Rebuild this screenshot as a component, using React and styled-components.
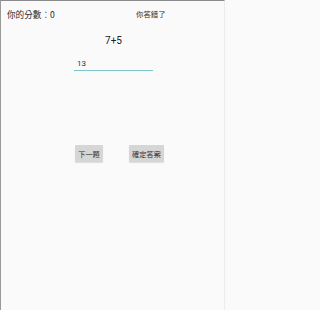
import styled, { createGlobalStyle } from 'styled-components';

const Global = createGlobalStyle`
  html, body {
    margin: 0;
    padding: 0;
    background: #fafafa;
  }
  body {
    font-family: "Noto Sans CJK TC", "Noto Sans", Roboto, sans-serif;
  }
`;

const Screen = styled.div`
  width: 225px;
  height: 310px;
  box-sizing: border-box;
  border-top: 1px solid #8a8a8a;
  border-left: 1px solid #9a9a9a;
  border-right: 1px solid #ececec;
  background: #fafafa;
  display: flex;
  flex-direction: column;
`;

const Header = styled.div`
  display: grid;
  grid-template-columns: 129px 1fr;
  align-items: center;
  padding: 6px 0 0 6px;
  height: 14px;
`;

const Score = styled.span`
  font-size: 8.6px;
  color: #2a2a2a;
  line-height: 14px;
  white-space: nowrap;
`;

const Message = styled.span`
  font-size: 7.4px;
  color: #2a2a2a;
  line-height: 14px;
  white-space: nowrap;
`;

const Question = styled.div`
  margin-top: 13px;
  text-align: center;
  font-family: Roboto, "Noto Sans", sans-serif;
  font-size: 10px;
  line-height: 14px;
  color: #222;
  padding-left: 2px;
`;

const Field = styled.div`
  margin: 10px 0 0 73px;
  width: 79px;
  box-sizing: border-box;
  padding: 0 0 1px 3px;
  border-bottom: 1px solid #7ec6cc;
  font-family: Roboto, "Noto Sans", sans-serif;
  font-size: 8px;
  line-height: 11px;
  color: #333;
`;

const Actions = styled.div`
  display: flex;
  gap: 26px;
  padding-left: 74px;
  margin-top: 74px;
`;

const Button = styled.button`
  height: 17px;
  width: ${(p) => p.w}px;
  padding: 0;
  border: none;
  border-radius: 1px;
  background: #d6d6d6;
  box-shadow: 0 1px 1px rgba(0, 0, 0, 0.12);
  font-family: "Noto Sans CJK TC", sans-serif;
  font-size: 7.2px;
  color: #333;
  display: flex;
  align-items: center;
  justify-content: center;
`;

export default function App() {
  return (
    <>
      <Global />
      <Screen>
        <Header>
          <Score>你的分數：0</Score>
          <Message>你答錯了</Message>
        </Header>
        <Question>7+5</Question>
        <Field>13</Field>
        <Actions>
          <Button w={28}>下一題</Button>
          <Button w={35}>確定答案</Button>
        </Actions>
      </Screen>
    </>
  );
}
